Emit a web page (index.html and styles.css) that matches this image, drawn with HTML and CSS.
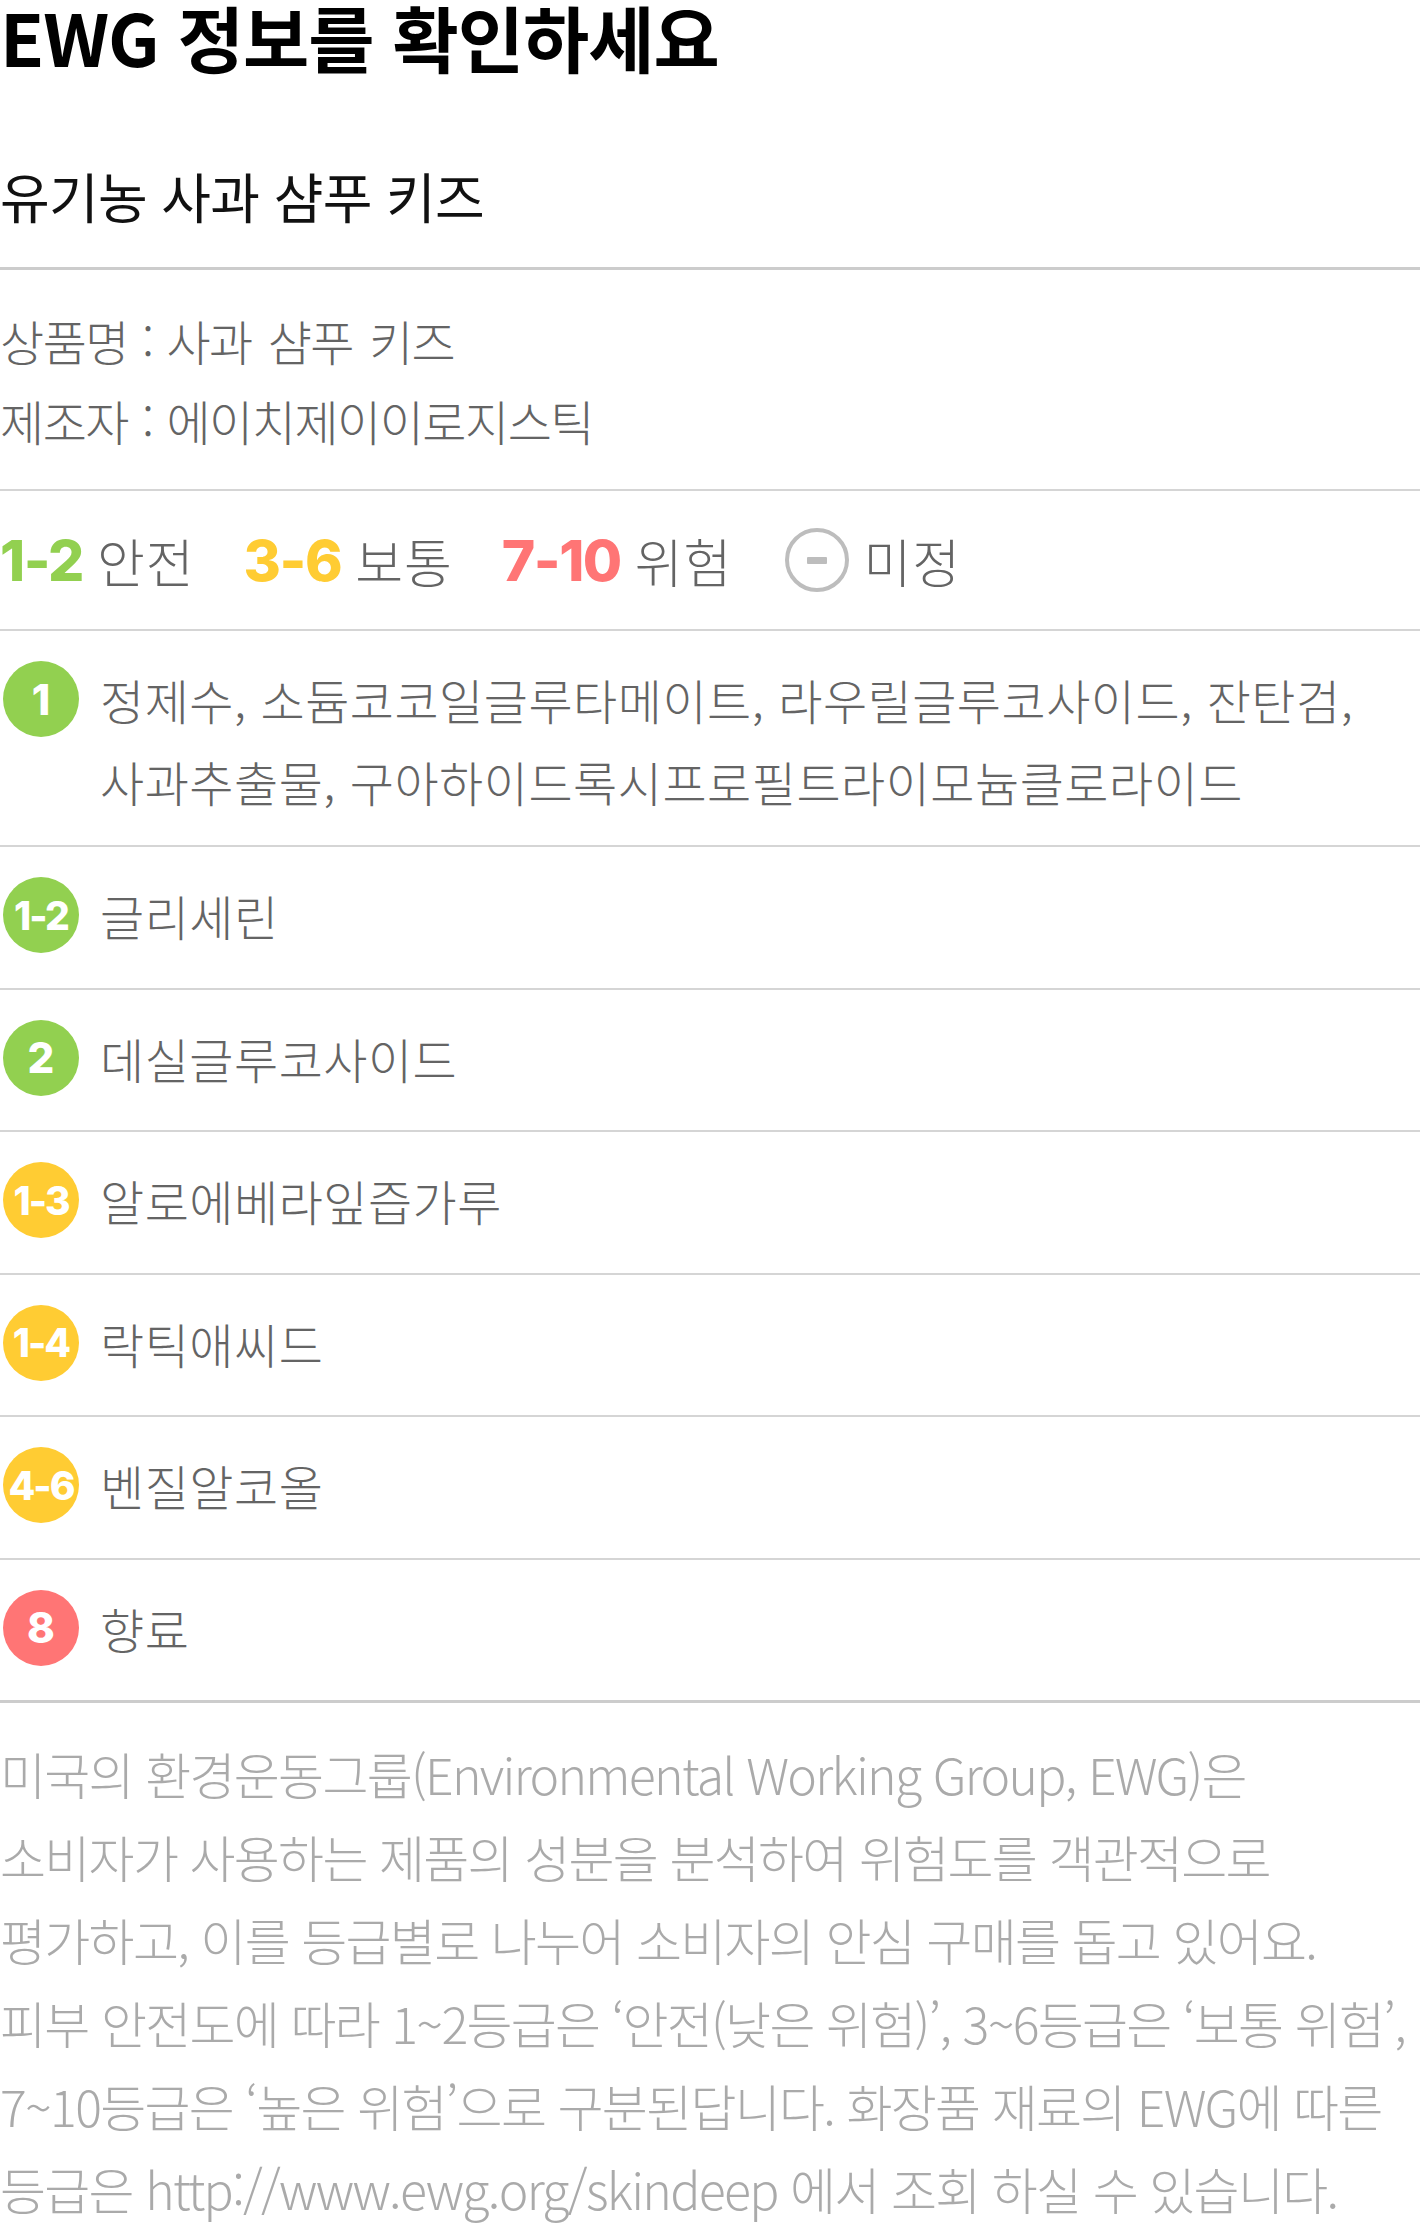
FILE: index.html
```html
<!DOCTYPE html>
<html lang="ko">
<head>
    <meta charset="UTF-8">
    <meta name="viewport" content="width=device-width, initial-scale=1.0">
    <title>EWG 정보</title>
    <link rel="stylesheet" href="styles.css">
</head>
<body>
    <div class="ewg">
        <h1 class="ewg-title">EWG 정보를 확인하세요</h1>
        <h2 class="product-name">유기농 사과 샴푸 키즈</h2>

        <div class="product-info">
            <p>상품명 : <span class="product-value">사과 샴푸 키즈</span></p>
            <p>제조자 : 에이치제이이로지스틱</p>
        </div>

        <div class="legend">
            <span class="legend-item"><b class="num safe">1-2</b>안전</span>
            <span class="legend-item"><b class="num mid">3-6</b>보통</span>
            <span class="legend-item"><b class="num high">7-10</b>위험</span>
            <span class="legend-item"><i class="none-icon"></i>미정</span>
        </div>

        <ul class="ingredients">
            <li>
                <span class="badge bg-safe">1</span>
                <span class="ing-name">정제수, 소듐코코일글루타메이트, 라우릴글루코사이드, 잔탄검, 사과추출물, 구아하이드록시프로필트라이모늄클로라이드</span>
            </li>
            <li>
                <span class="badge range bg-safe">1-2</span>
                <span class="ing-name">글리세린</span>
            </li>
            <li>
                <span class="badge bg-safe">2</span>
                <span class="ing-name">데실글루코사이드</span>
            </li>
            <li>
                <span class="badge range bg-mid">1-3</span>
                <span class="ing-name">알로에베라잎즙가루</span>
            </li>
            <li>
                <span class="badge range bg-mid">1-4</span>
                <span class="ing-name">락틱애씨드</span>
            </li>
            <li>
                <span class="badge range bg-mid">4-6</span>
                <span class="ing-name">벤질알코올</span>
            </li>
            <li>
                <span class="badge bg-high">8</span>
                <span class="ing-name">향료</span>
            </li>
        </ul>

        <!-- 안내 문구 -->
        <p class="ewg-note">
            미국의 환경운동그룹(Environmental Working Group, EWG)은<br>
            소비자가 사용하는 제품의 성분을 분석하여 위험도를 객관적으로<br>
            평가하고, 이를 등급별로 나누어 소비자의 안심 구매를 돕고 있어요.<br>
            피부 안전도에 따라 1~2등급은 ‘안전(낮은 위험)’, 3~6등급은 ‘보통 위험’,<br>
            7~10등급은 ‘높은 위험’으로 구분된답니다. 화장품 재료의 EWG에 따른<br>
            등급은 http://www.ewg.org/skindeep 에서 조회 하실 수 있습니다.
        </p>
    </div>
</body>
</html>
```

FILE: styles.css
```css
body {
    margin: 0;
    font-family: "Noto Sans CJK KR", "Noto Sans", sans-serif;
    color: #646464;
    background-color: #fff;
}
.ewg-title {
    margin: 0;
    font-size: 72px;
    line-height: 72px;
    font-weight: 700;
    color: #000;
    letter-spacing: -1px;
}
.product-name {
    margin: 84px 0 0;
    padding-bottom: 31px;
    font-size: 54px;
    line-height: 80px;
    font-weight: 400;
    color: #111;
    letter-spacing: -0.7px;
    border-bottom: 3px solid #ccc;
}
.product-info {
    padding: 30px 0 29px;
    border-bottom: 2px solid #d5d5d5;
}
.product-info p {
    margin: 0;
    font-size: 48px;
    line-height: 80px;
    font-weight: 300;
    letter-spacing: -1.5px;
    word-spacing: 2px;
}
.product-value {
    word-spacing: 4px;
}
.legend {
    display: flex;
    align-items: center;
    padding: 29px 0;
    height: 80px;
    border-bottom: 2px solid #d5d5d5;
}
.legend-item {
    display: flex;
    align-items: center;
    gap: 14px;
    margin-right: 49px;
    font-size: 52px;
    font-weight: 300;
    letter-spacing: 1px;
}
.num {
    font-family: Inter, "Noto Sans", sans-serif;
    font-size: 57px;
    font-weight: 800;
    letter-spacing: -1.5px;
}
.safe { color: #92d050; }
.mid { color: #ffcc33; }
.high { color: #ff7575; }
.none-icon {
    display: flex;
    align-items: center;
    justify-content: center;
    width: 56px;
    height: 56px;
    border: 4px solid #bdbdbd;
    border-radius: 50%;
    margin-left: 4px;
}
.none-icon::after {
    content: "";
    width: 20px;
    height: 7px;
    border-radius: 1px;
    background-color: #bdbdbd;
}
.ingredients {
    list-style: none;
    margin: 0;
    padding: 0;
}
.ingredients li {
    display: flex;
    align-items: flex-start;
    gap: 21px;
    padding: 30px 0 31.5px;
    border-bottom: 2px solid #d5d5d5;
}
.ingredients li:first-child {
    padding-bottom: 23px;
}
.ingredients li:last-child {
    border-bottom: 3px solid #ccc;
}
.badge {
    flex: none;
    display: flex;
    align-items: center;
    justify-content: center;
    width: 76px;
    height: 76px;
    margin-left: 3px;
    border-radius: 50%;
    color: #fff;
    font-family: Inter, "Noto Sans", sans-serif;
    font-size: 42px;
    font-weight: 800;
}
.badge.range {
    font-size: 39px;
    letter-spacing: -2px;
}
.bg-safe { background-color: #92d050; }
.bg-mid { background-color: #ffcc33; }
.bg-high { background-color: #ff7575; }
.ing-name {
    font-size: 48px;
    line-height: 82px;
    margin-top: -3px;
    font-weight: 300;
    letter-spacing: 0.5px;
    word-break: keep-all;
}
.ewg-note {
    margin: 0;
    padding-top: 29px;
    font-size: 50px;
    line-height: 83px;
    font-weight: 200;
    letter-spacing: -1.7px;
    color: #aaa;
    white-space: nowrap;
}
```
